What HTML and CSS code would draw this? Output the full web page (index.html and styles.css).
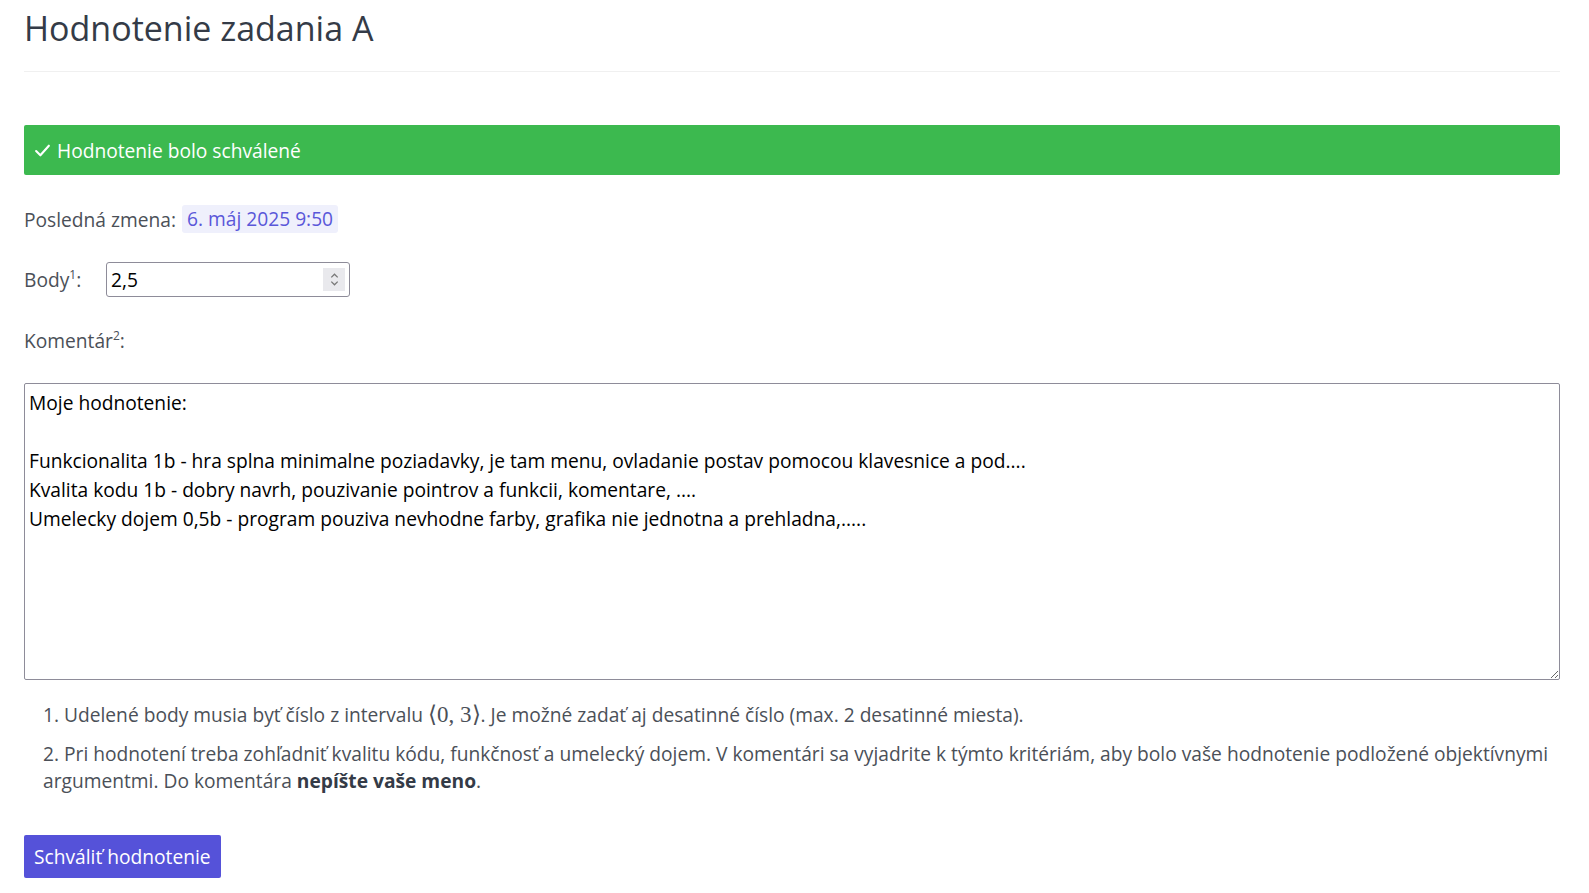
FILE: index.html
```html
<!DOCTYPE html>
<html lang="sk">
<head>
  <meta charset="UTF-8" />
  <meta name="viewport" content="width=device-width, initial-scale=1.0"/>
  <title>Hodnotenie zadania A</title>
  <link rel="stylesheet" href="styles.css">
</head>
<body>
  <div class="container">
    <h1 class="page-title">Hodnotenie zadania A</h1>

    <div class="alert-success">
      <svg class="check" viewBox="0 0 16 16" width="16" height="16" aria-hidden="true">
        <path d="M2 8.5l4 4 8-9" fill="none" stroke="currentColor" stroke-width="2" stroke-linecap="round" stroke-linejoin="round"/>
      </svg>
      <span>Hodnotenie bolo schválené</span>
    </div>

    <div class="meta-row">
      <span>Posledná zmena:</span>
      <span class="date-badge">6. máj 2025 9:50</span>
    </div>

    <div class="points-row">
      <label for="points">Body<sup>1</sup>:</label>
      <div class="number-input">
        <input type="text" id="points" value="2,5">
        <span class="spinner">
          <svg viewBox="0 0 10 16" width="11" height="17" aria-hidden="true">
            <path d="M2 6l3-3 3 3M2 10l3 3 3-3" fill="none" stroke="#777" stroke-width="1.2"/>
          </svg>
        </span>
      </div>
    </div>

    <label class="comment-label" for="comment">Komentár<sup>2</sup>:</label>
    <textarea id="comment">Moje hodnotenie:

Funkcionalita 1b - hra splna minimalne poziadavky, je tam menu, ovladanie postav pomocou klavesnice a pod....
Kvalita kodu 1b - dobry navrh, pouzivanie pointrov a funkcii, komentare, ....
Umelecky dojem 0,5b - program pouziva nevhodne farby, grafika nie jednotna a prehladna,.....</textarea>

    <ol class="notes">
      <li>Udelené body musia byť číslo z intervalu <span class="math">⟨0, 3⟩</span>. Je možné zadať aj desatinné číslo (max. 2 desatinné miesta).</li>
      <li>Pri hodnotení treba zohľadniť kvalitu kódu, funkčnosť a umelecký dojem. V komentári sa vyjadrite k týmto kritériám, aby bolo vaše hodnotenie podložené objektívnymi argumentmi. Do komentára <strong>nepíšte vaše meno</strong>.</li>
    </ol>

    <button class="btn-approve">Schváliť hodnotenie</button>
  </div>
</body>
</html>
```

FILE: styles.css
```css
* {
  box-sizing: border-box;
}

body {
  margin: 0;
  font-family: 'Open Sans', 'Noto Sans', sans-serif;
  font-size: 19.2px;
  color: #4b5058;
  background: #fff;
}

.container {
  width: 1536px;
  margin-left: 24px;
}

.page-title {
  margin: 0;
  padding: 4px 0 19px;
  font-size: 34px;
  font-weight: 400;
  color: #343b47;
  border-bottom: 1px solid #f0f0f0;
  line-height: 48px;
}

.alert-success {
  margin-top: 53px;
  height: 50px;
  display: flex;
  align-items: center;
  gap: 6px;
  padding: 0 10px;
  background: #3cb94f;
  color: #fff;
  border-radius: 2px;
}

.check {
  width: 17px;
  height: 17px;
}

.meta-row {
  margin-top: 30px;
  display: flex;
  align-items: center;
  gap: 6px;
  height: 28px;
}

.date-badge {
  background: #eff0fc;
  color: #5a57d9;
  padding: 0 5px;
  border-radius: 3px;
  line-height: 28px;
}

.points-row {
  margin-top: 29px;
  display: flex;
  align-items: center;
}

.points-row label {
  width: 82px;
}

sup {
  font-size: 12px;
  line-height: 0;
  vertical-align: 8px;
}

.number-input {
  width: 244px;
  height: 35px;
  border: 1px solid #8e8c99;
  border-radius: 3px;
  display: flex;
  align-items: center;
  padding: 0 4px 0 4px;
}

.number-input input {
  flex: 1;
  border: none;
  outline: none;
  font: inherit;
  color: #000;
  padding: 0;
  width: 0;
}

.spinner {
  width: 22px;
  height: 23px;
  background: #e9e9ed;
  display: flex;
  align-items: center;
  justify-content: center;
}

.comment-label {
  display: block;
  margin-top: 30px;
}

textarea {
  display: block;
  width: 100%;
  height: 297px;
  margin-top: 29px;
  padding: 4px 4px;
  border: 1px solid #8e8c99;
  border-radius: 2px;
  font-family: 'Open Sans', sans-serif;
  font-size: 19.2px;
  line-height: 29px;
  color: #000;
  resize: vertical;
}

.notes {
  margin: 21px 0 0;
  padding-left: 19px;
  list-style-position: inside;
  line-height: 27px;
}

.notes li {
  margin-bottom: 12px;
}

.math {
  font-family: 'Liberation Serif', serif;
  font-size: 23px;
}

.notes strong {
  font-weight: 700;
  color: #343b47;
}

.btn-approve {
  margin-top: 29px;
  height: 43px;
  padding: 0 10px;
  background: #5552d9;
  color: #fff;
  border: none;
  border-radius: 2px;
  font: inherit;
  cursor: pointer;
}
```
